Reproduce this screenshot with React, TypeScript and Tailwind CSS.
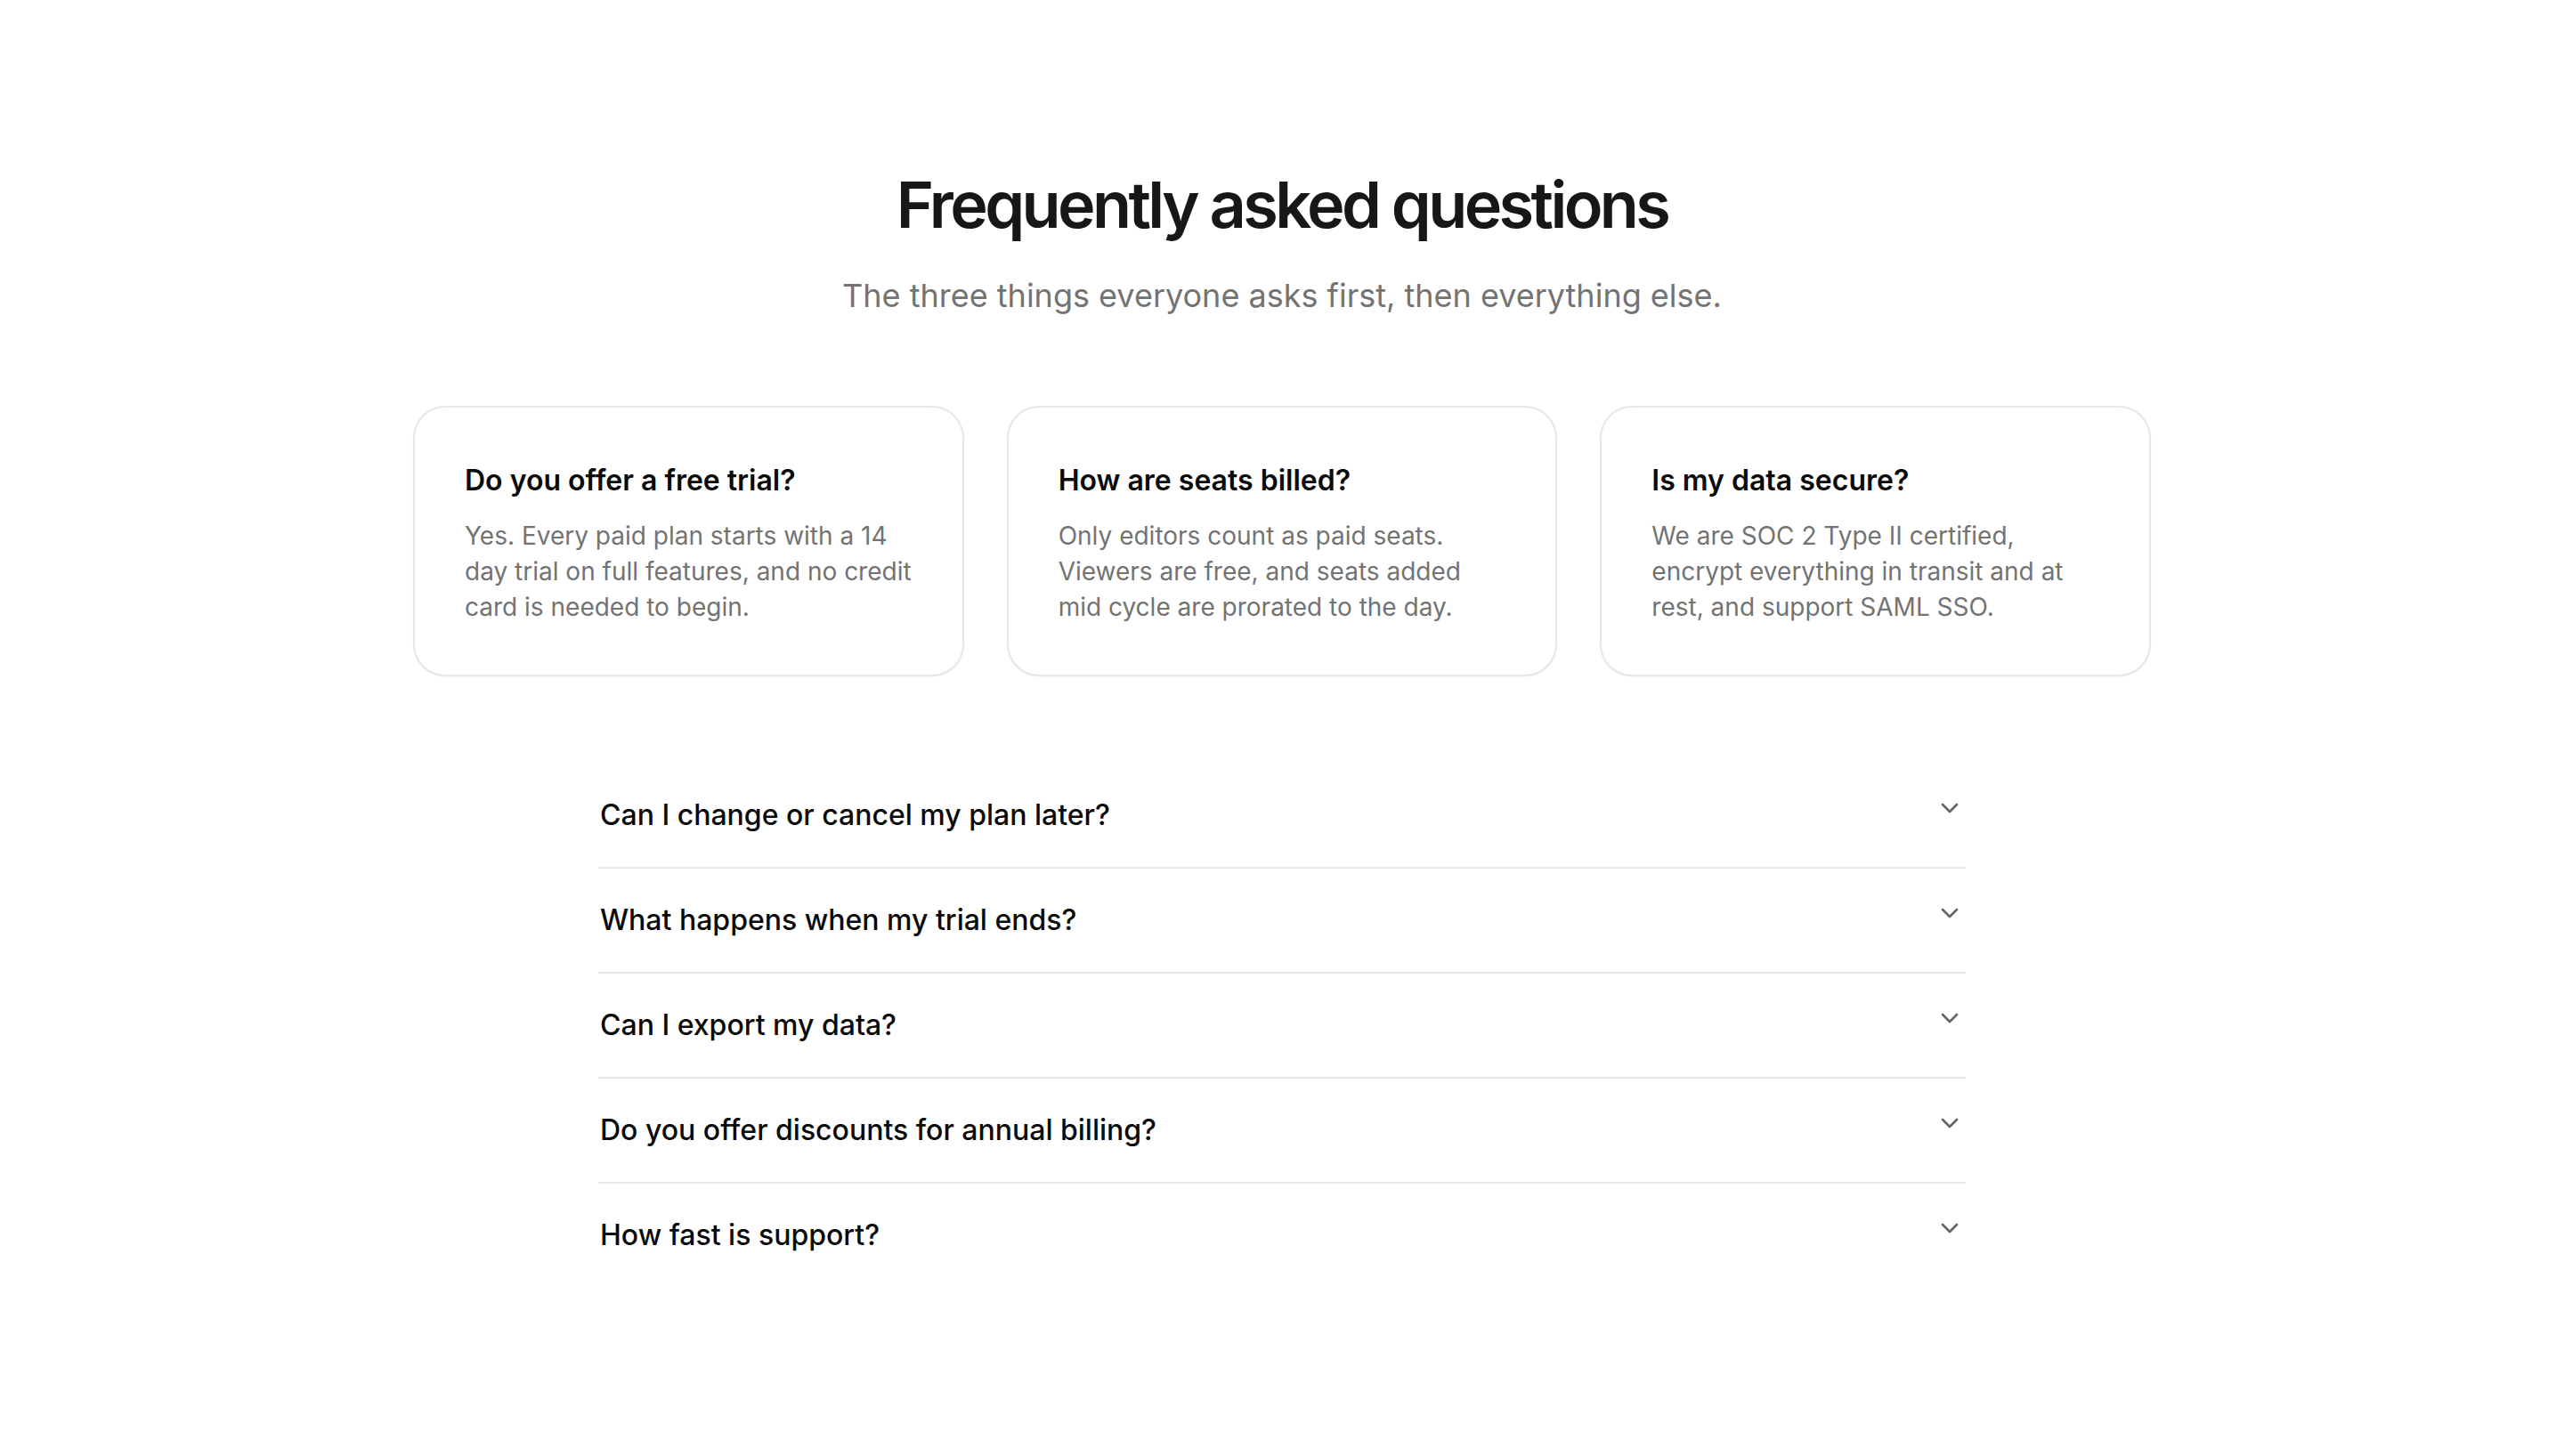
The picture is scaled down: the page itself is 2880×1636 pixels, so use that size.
import { ChevronDown } from 'lucide-react';

const featured = [
  {
    q: 'Do you offer a free trial?',
    a: 'Yes. Every paid plan starts with a 14 day trial on full features, and no credit card is needed to begin.',
  },
  {
    q: 'How are seats billed?',
    a: 'Only editors count as paid seats. Viewers are free, and seats added mid cycle are prorated to the day.',
  },
  {
    q: 'Is my data secure?',
    a: 'We are SOC 2 Type II certified, encrypt everything in transit and at rest, and support SAML SSO.',
  },
];

const questions = [
  'Can I change or cancel my plan later?',
  'What happens when my trial ends?',
  'Can I export my data?',
  'Do you offer discounts for annual billing?',
  'How fast is support?',
];

function FeaturedCard({ q, a }: { q: string; a: string }) {
  return (
    <div className="rounded-[36px] border-2 border-[#e7e7e7] bg-white px-14 pt-[58px] pb-14 shadow-[0_1px_2px_rgba(0,0,0,0.04)]">
      <h3 className="text-[32px] leading-[48px] font-semibold text-[#0a0a0a]">{q}</h3>
      <p className="mt-[18px] text-[28px] leading-[40px] text-[#737373]">{a}</p>
    </div>
  );
}

function QuestionRow({ q }: { q: string }) {
  return (
    <button
      type="button"
      className="flex w-full items-start justify-between gap-8 py-[34px] pl-[2px] text-left"
    >
      <span className="text-[32px] leading-[48px] font-medium text-[#0a0a0a]">{q}</span>
      <ChevronDown className="mr-[2px] h-8 w-8 shrink-0 text-[#666666]" strokeWidth={2} />
    </button>
  );
}

export default function App() {
  return (
    <div className="min-h-screen bg-white font-['Inter','Noto_Sans',sans-serif] antialiased">
      <section className="mx-auto max-w-[2048px] px-12 pt-[190px] pb-48">
        {/* Header */}
        <h1 className="text-center text-[72px] leading-[80px] font-semibold tracking-tighter text-[#171717]">
          Frequently asked questions
        </h1>
        <p className="mt-[34px] text-center text-[36px] leading-[56px] text-[#737373]">
          The three things everyone asks first, then everything else.
        </p>

        {/* Top three */}
        <div className="mt-24 grid grid-cols-3 gap-12">
          {featured.map((item) => (
            <FeaturedCard key={item.q} q={item.q} a={item.a} />
          ))}
        </div>

        {/* Everything else */}
        <div className="mx-auto mt-[98px] max-w-[1536px] divide-y-2 divide-[#e7e7e7]">
          {questions.map((q) => (
            <QuestionRow key={q} q={q} />
          ))}
        </div>
      </section>
    </div>
  );
}
